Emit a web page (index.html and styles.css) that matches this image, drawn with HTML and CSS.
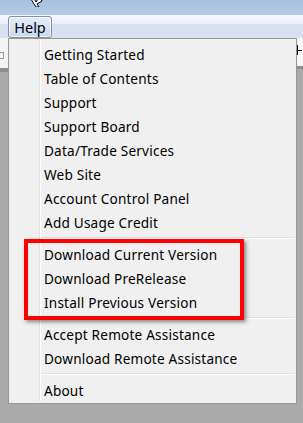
FILE: index.html
```html
<!DOCTYPE html>
<html>
<head>
<meta charset="utf-8">
<link rel="stylesheet" href="styles.css">
</head>
<body>
<div class="screen">
  <div class="titlebar">
    <svg class="cursor" width="14" height="8" viewBox="0 0 14 8">
      <path d="M1 0 L4 0 L6 3 L8 0 L11 0 L12 2 L7 5 L9 8 L6 8 L4 5 Z" fill="#fff" stroke="#000" stroke-width="1"/>
    </svg>
  </div>
  <div class="toolstrip"></div>
  <div class="menubar">
    <div class="menubtn">Help</div>
  </div>
  <div class="workarea">
    <div class="leftpane">
      <div class="leftwhite"><span class="node"></span></div>
      <div class="leftbar"></div>
    </div>
    <div class="rightpane">
      <div class="rightwhite"><span class="hglyph"></span></div>
      <div class="rightbar"></div>
    </div>
  </div>

  <div class="menu">
    <div class="gutter"></div>
    <div class="item">Getting Started</div>
    <div class="item">Table of Contents</div>
    <div class="item">Support</div>
    <div class="item">Support Board</div>
    <div class="item">Data/Trade Services</div>
    <div class="item">Web Site</div>
    <div class="item">Account Control Panel</div>
    <div class="item">Add Usage Credit</div>
    <div class="sep"></div>
    <div class="item">Download Current Version</div>
    <div class="item">Download PreRelease</div>
    <div class="item">Install Previous Version</div>
    <div class="sep"></div>
    <div class="item">Accept Remote Assistance</div>
    <div class="item">Download Remote Assistance</div>
    <div class="sep"></div>
    <div class="item">About</div>
  </div>
  <div class="highlight"></div>
</div>
</body>
</html>
```
FILE: styles.css
```css
html, body {
  margin: 0;
  padding: 0;
}
body {
  width: 303px;
  height: 423px;
  overflow: hidden;
  background: #ababab;
  font-family: "Noto Sans", "Open Sans", sans-serif;
}
.screen {
  position: relative;
  width: 303px;
  height: 423px;
  display: flex;
  flex-direction: column;
}
.titlebar {
  height: 15px;
  background: linear-gradient(#a5c1df, #b3cbe6);
  position: relative;
}
.cursor {
  position: absolute;
  left: 30px;
  top: -1px;
}
.toolstrip {
  height: 9px;
  background: linear-gradient(#f6f9fd, #e9eef8);
}
.menubar {
  height: 14px;
  background: #d9e0f1;
  position: relative;
}
.menubtn {
  position: absolute;
  left: 8px;
  top: -8px;
  width: 42px;
  height: 20px;
  border: 1px solid #8a8f98;
  border-radius: 3px;
  background: linear-gradient(#e4edf8, #c9daee);
  box-shadow: inset 0 0 0 1px rgba(255,255,255,0.6);
  font-size: 14.5px;
  line-height: 20px;
  text-align: center;
  color: #000;
}
.workarea {
  flex: 1;
  display: flex;
  justify-content: space-between;
}
.leftpane, .rightpane {
  width: 8px;
  display: flex;
  flex-direction: column;
}
.leftwhite {
  height: 30px;
  background: #f4f4f4;
  position: relative;
}
.node {
  position: absolute;
  left: 0;
  top: 14px;
  width: 3px;
  height: 5px;
  border: 1px solid #999;
  border-left: none;
}
.leftbar {
  height: 4px;
  background: #8e8e8e;
}
.rightwhite {
  height: 28px;
  background: #f7f7f7;
  position: relative;
}
.hglyph {
  position: absolute;
  left: 1px;
  top: 7px;
  width: 5px;
  height: 10px;
  border-left: 2px solid #000;
}
.hglyph::after {
  content: "";
  position: absolute;
  left: 0;
  top: 5px;
  width: 4px;
  height: 1px;
  background: #000;
}
.rightbar {
  height: 3px;
  background: #8e8e8e;
}
.menu {
  position: absolute;
  left: 8px;
  top: 38px;
  width: 289px;
  border: 1px solid #979797;
  background: #f0f0f0;
  padding: 3px 2px 1px 2px;
  box-sizing: border-box;
  display: flex;
  flex-direction: column;
}
.gutter {
  position: absolute;
  left: 30px;
  top: 2px;
  bottom: 2px;
  width: 1px;
  background: #e2e3e3;
  border-right: 1px solid #fff;
}
.item {
  height: 24px;
  box-sizing: border-box;
  padding-top: 1px;
  line-height: 24px;
  padding-left: 33px;
  font-size: 13.6px;
  letter-spacing: 0.2px;
  color: #000;
  white-space: nowrap;
}
.sep {
  height: 8px;
  margin-left: 31px;
  position: relative;
}
.sep::before {
  content: "";
  position: absolute;
  left: 0;
  right: 0;
  top: 3px;
  height: 1px;
  background: #e0e0e0;
  border-bottom: 1px solid #fff;
}
.highlight {
  position: absolute;
  left: 24px;
  top: 239px;
  width: 220px;
  height: 81px;
  box-sizing: border-box;
  border: 4px solid #ff0000;
  box-shadow: 2px 2px 4px rgba(0,0,0,0.45);
}
```
